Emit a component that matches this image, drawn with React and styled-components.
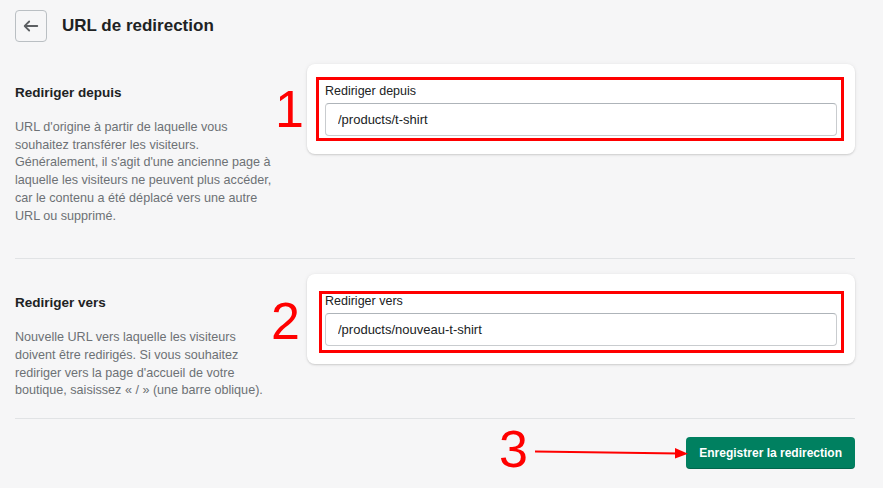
import React from 'react';
import styled, { createGlobalStyle } from 'styled-components';

const GlobalStyle = createGlobalStyle`
  html, body {
    margin: 0;
    padding: 0;
    background: #f6f6f7;
  }
  body {
    font-family: "Liberation Sans", Arial, sans-serif;
    color: #202223;
  }
  * {
    box-sizing: border-box;
  }
`;

const Page = styled.div`
  position: relative;
  width: 883px;
  height: 488px;
  padding: 10px 28px 0 15px;
  overflow: hidden;
`;

const Header = styled.header`
  display: flex;
  align-items: center;
  gap: 15px;
  height: 32px;
  margin-bottom: 7px;
`;

const BackButton = styled.button`
  display: flex;
  align-items: center;
  justify-content: center;
  width: 32px;
  height: 32px;
  padding: 0;
  border: 1px solid #babfc3;
  border-radius: 4px;
  background: transparent;
  svg {
    width: 18px;
    height: 18px;
    fill: #5c5f62;
  }
`;

const Title = styled.h1`
  margin: 0;
  font-size: 17px;
  font-weight: 700;
  color: #202223;
`;

const Section = styled.section`
  display: grid;
  grid-template-columns: 272px 1fr;
  column-gap: 20px;
  align-items: start;
  padding-top: 15px;
  padding-bottom: ${(p) => p.$bottom}px;
  border-bottom: 1px solid #e1e3e5;
`;

const Annotation = styled.div`
  padding-top: 19px;
`;

const Heading = styled.h2`
  margin: 0;
  font-size: 13.5px;
  font-weight: 700;
  line-height: 20px;
  color: #202223;
`;

const Description = styled.p`
  margin: 16px 0 0;
  font-size: 12.6px;
  line-height: 17.7px;
  color: #6d7175;
`;

const Card = styled.div`
  position: relative;
  background: #ffffff;
  border-radius: 8px;
  padding: 18px;
  box-shadow: 0 0 5px rgba(23, 24, 24, 0.05), 0 1px 2px rgba(0, 0, 0, 0.15);
`;

const Label = styled.label`
  display: block;
  font-size: 12.5px;
  line-height: 18px;
  margin-bottom: 3px;
  color: #202223;
`;

const Input = styled.input`
  display: block;
  width: 100%;
  height: 33px;
  padding: 0 12px;
  border: 1px solid #c9cccf;
  border-top-color: #aeb4b9;
  border-radius: 4px;
  background: #ffffff;
  font-family: "Liberation Sans", Arial, sans-serif;
  font-size: 13px;
  color: #202223;
  outline: none;
`;

// annotation frame drawn over the field
const RedBox = styled.div`
  position: absolute;
  top: ${(p) => p.$inset[0]}px;
  right: ${(p) => p.$inset[1]}px;
  bottom: ${(p) => p.$inset[2]}px;
  left: ${(p) => p.$inset[3]}px;
  border: 3px solid #ff0000;
  pointer-events: none;
`;

const Footer = styled.div`
  display: flex;
  justify-content: flex-end;
  padding-top: 18px;
`;

const SaveButton = styled.button`
  height: 32px;
  padding: 0 13px;
  border: none;
  border-radius: 4px;
  background: #008060;
  color: #ffffff;
  font-family: "Liberation Sans", Arial, sans-serif;
  font-size: 12px;
  font-weight: 700;
  box-shadow: inset 0 -1px 0 rgba(0, 0, 0, 0.2);
`;

const Mark = styled.span`
  position: absolute;
  left: ${(p) => p.$x}px;
  top: ${(p) => p.$y}px;
  font-family: "Liberation Sans", Arial, sans-serif;
  font-size: 52px;
  line-height: 1;
  color: #ff0000;
`;

const Arrow = styled.svg`
  position: absolute;
  left: 533px;
  top: 443px;
  width: 160px;
  height: 20px;
`;

const ArrowLeftIcon = () => (
  <svg viewBox="0 0 20 20">
    <path d="M17 9H5.414l3.293-3.293a.999.999 0 1 0-1.414-1.414l-5 5a.999.999 0 0 0 0 1.414l5 5a.997.997 0 0 0 1.414 0 .999.999 0 0 0 0-1.414L5.414 11H17a1 1 0 1 0 0-2z" />
  </svg>
);

const RedirectSection = ({ title, text, label, value, bottom, inset }) => (
  <Section $bottom={bottom}>
    <Annotation>
      <Heading>{title}</Heading>
      <Description>{text}</Description>
    </Annotation>
    <Card>
      <Label>{label}</Label>
      <Input defaultValue={value} />
      <RedBox $inset={inset} />
    </Card>
  </Section>
);

export default function App() {
  return (
    <>
      <GlobalStyle />
      <Page>
        <Header>
          <BackButton aria-label="Retour">
            <ArrowLeftIcon />
          </BackButton>
          <Title>URL de redirection</Title>
        </Header>

        <RedirectSection
          title="Rediriger depuis"
          text={
            <>
              URL d'origine à partir de laquelle vous
              <br />
              souhaitez transférer les visiteurs.
              <br />
              Généralement, il s'agit d'une ancienne page à
              <br />
              laquelle les visiteurs ne peuvent plus accéder,
              <br />
              car le contenu a été déplacé vers une autre
              <br />
              URL ou supprimé.
            </>
          }
          label="Rediriger depuis"
          value="/products/t-shirt"
          bottom={33}
          inset={[13, 11, 13, 9]}
        />

        <RedirectSection
          title="Rediriger vers"
          text={
            <>
              Nouvelle URL vers laquelle les visiteurs
              <br />
              doivent être redirigés. Si vous souhaitez
              <br />
              rediriger vers la page d'accueil de votre
              <br />
              boutique, saisissez « / » (une barre oblique).
            </>
          }
          label="Rediriger vers"
          value="/products/nouveau-t-shirt"
          bottom={18}
          inset={[17, 11, 11, 12]}
        />

        <Footer>
          <SaveButton>Enregistrer la redirection</SaveButton>
        </Footer>

        <Mark $x={275} $y={83}>1</Mark>
        <Mark $x={271} $y={295}>2</Mark>
        <Mark $x={499} $y={423}>3</Mark>
        <Arrow viewBox="0 0 160 20">
          <line x1="2" y1="8.5" x2="146" y2="10.5" stroke="#ff0000" strokeWidth="2" />
          <polygon points="142,5 155,10.8 142,15.5" fill="#ff0000" />
        </Arrow>
      </Page>
    </>
  );
}
